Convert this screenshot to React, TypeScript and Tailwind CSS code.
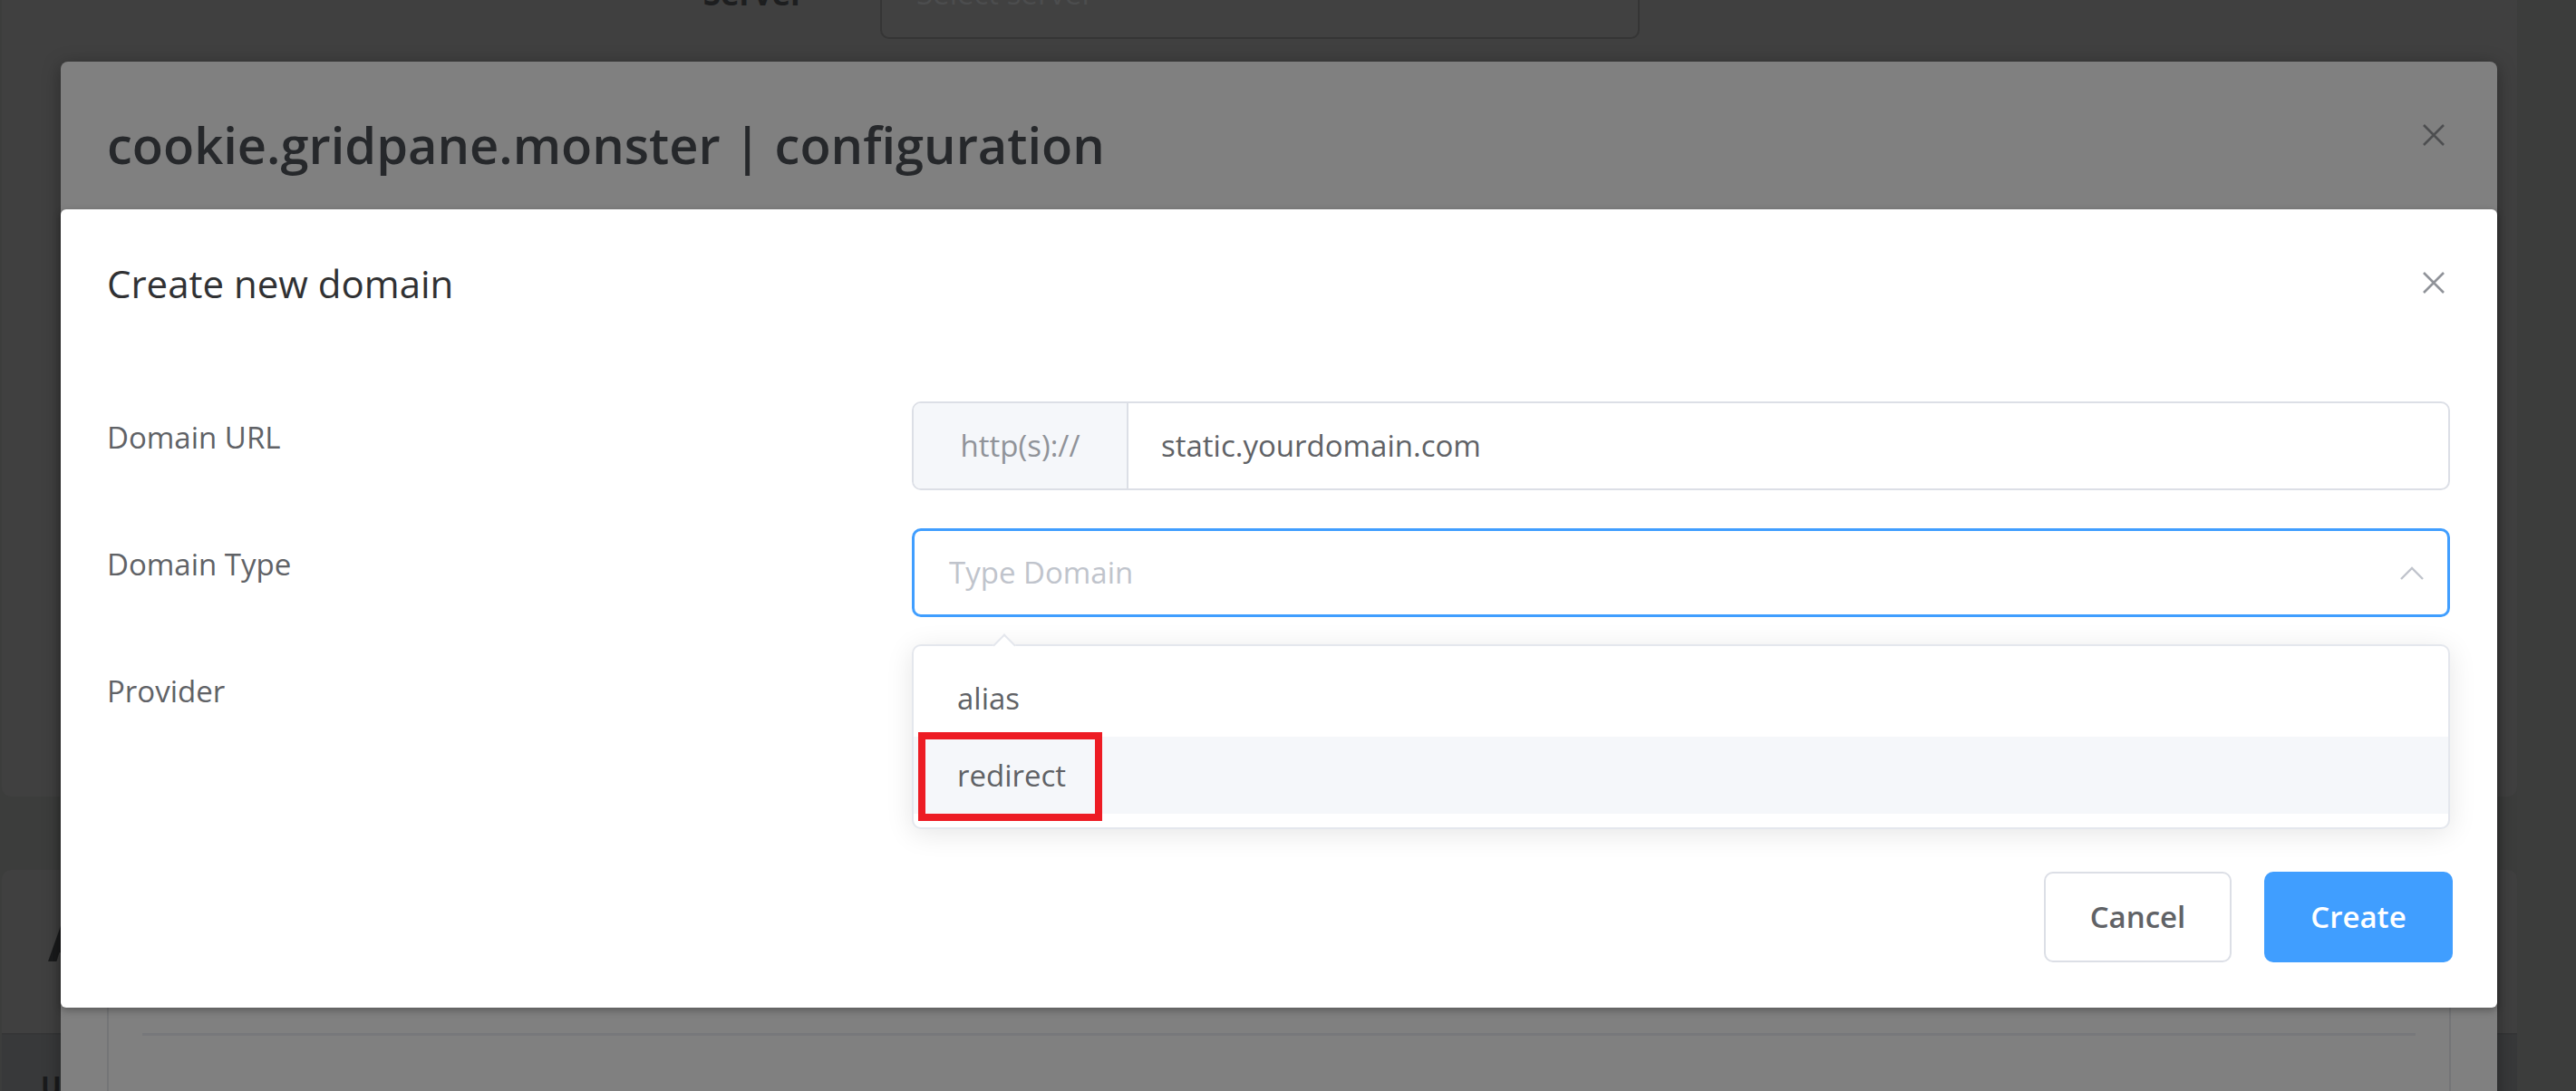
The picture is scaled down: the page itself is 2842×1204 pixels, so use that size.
import React from 'react';

const CloseIcon = ({ color }: { color: string }) => (
  <svg width="24" height="24" viewBox="0 0 24 24" fill="none">
    <path d="M1 1L23 23M23 1L1 23" stroke={color} strokeWidth="2.6" />
  </svg>
);

const Chevron = ({ up }: { up?: boolean }) => (
  <svg width="26" height="15" viewBox="0 0 26 15" fill="none">
    <path
      d={up ? 'M1 14L13 2L25 14' : 'M1 1L13 13L25 1'}
      stroke="#c0c4cc"
      strokeWidth="2.4"
    />
  </svg>
);

const FormRow = ({ label, children }: { label: string; children: React.ReactNode }) => (
  <div className="flex">
    <div className="w-[888px] text-[33px] leading-[80px] text-[#606266]">{label}</div>
    <div className="w-[1697px]">{children}</div>
  </div>
);

export default function App() {
  return (
    <div className="relative h-[1204px] w-[2842px] overflow-hidden bg-[#3c3d3c] font-['Open_Sans',sans-serif]">
      {/* page behind the modals */}
      <div className="pl-[2px] pr-[65px]">
        <div className="-mt-[100px] h-[979px] rounded-b-[10px] bg-[#404040] pt-[43px]">
          <div className="flex items-center">
            <div className="w-[969px] pr-[83px] text-right text-[35px] font-bold text-[#1d1e1f]">Server</div>
            <div className="flex h-[100px] w-[838px] items-center rounded-[10px] border-2 border-[#353535] bg-[#414141] pl-[38px] text-[33px] text-[#4c4d4e]">
              Select server
            </div>
          </div>
        </div>
        <div className="mt-[81px] rounded-t-[10px] bg-[#404040]">
          <div className="pl-[51px] pt-[39px] pb-[61px] text-[58px] font-bold leading-[80px] text-[#1a1b1c]">
            Aliases
          </div>
          <div className="h-[200px] border-t-2 border-[#353637] bg-[#38393a] pl-[43px] pt-[34px] text-[30px] font-bold text-[#1a1b1c]">
            URL
          </div>
        </div>
      </div>

      {/* configuration modal (dimmed) */}
      <div className="absolute left-[67px] top-[68px] h-[1200px] w-[2688px] rounded-[8px] bg-[#808080] shadow-[0_4px_20px_rgba(0,0,0,0.35)]">
        <div className="relative pl-[51px] pr-[60px] pt-[55px] pb-[40px]">
          <h2 className="text-[56px] font-semibold leading-[72px] text-[#26282b]">
            cookie.gridpane.monster | configuration
          </h2>
          <button className="absolute right-[58px] top-[69px]">
            <CloseIcon color="#4d4e50" />
          </button>
        </div>
        <div className="mx-[51px] h-[1200px] rounded-[8px] border-2 border-[#747577]">
          <div className="h-[903px]" />
          <div className="mx-[37px] h-[3px] bg-[#77787b]" />
        </div>
      </div>

      {/* create new domain dialog */}
      <div className="absolute left-[67px] top-[231px] w-[2688px] rounded-[6px] bg-white shadow-[0_3px_8px_rgba(0,0,0,0.3)]">
        <div className="relative pl-[51px] pr-[53px] pt-[52px] pb-[23px]">
          <h3 className="text-[42px] leading-[60px] text-[#303133]">Create new domain</h3>
          <button className="absolute right-[58px] top-[69px]">
            <CloseIcon color="#909399" />
          </button>
        </div>

        <div className="flex flex-col gap-[42px] pl-[51px] pr-[52px] pt-[77px] pb-[116px]">
          <FormRow label="Domain URL">
            <div className="flex h-[98px] overflow-hidden rounded-[10px] border-2 border-[#dcdfe6] text-[33px]">
              <div className="flex w-[237px] items-center justify-center border-r-2 border-[#dcdfe6] bg-[#f5f7fa] text-[#909399]">
                http(s)://
              </div>
              <div className="flex items-center pl-[36px] text-[#606266]">static.yourdomain.com</div>
            </div>
          </FormRow>
          <FormRow label="Domain Type">
            <div className="flex h-[98px] items-center rounded-[10px] border-[3px] border-[#409eff] pl-[38px] pr-[26px] text-[33px] text-[#c0c4cc]">
              <span>Type Domain</span>
              <span className="ml-auto flex">
                <Chevron up />
              </span>
            </div>
          </FormRow>
          <FormRow label="Provider">
            <div className="flex h-[98px] items-center justify-end rounded-[10px] border-2 border-[#dcdfe6] pr-[27px]">
              <Chevron />
            </div>
          </FormRow>
        </div>

        <div className="flex justify-end gap-[36px] pr-[49px] pt-[25px] pb-[50px]">
          <button className="h-[100px] w-[207px] rounded-[10px] border-2 border-[#dcdfe6] bg-white text-[33px] font-semibold text-[#606266]">
            Cancel
          </button>
          <button className="h-[100px] w-[208px] rounded-[10px] bg-[#409eff] text-[33px] font-semibold text-white">
            Create
          </button>
        </div>

        {/* select dropdown */}
        <div className="absolute left-[939px] top-[480px] w-[1697px] rounded-[10px] border-2 border-[#e4e7ed] bg-white py-[15px] shadow-[0_5px_30px_rgba(0,0,0,0.1)]">
          <div className="absolute left-[91px] -top-[10px] h-[18px] w-[18px] rotate-45 border-l-2 border-t-2 border-[#e4e7ed] bg-white" />
          <div className="relative flex h-[85px] items-center pl-[48px] text-[33px] text-[#606266]">alias</div>
          <div className="relative flex h-[85px] items-center bg-[#f5f7fa] pl-[48px] text-[33px] text-[#606266]">
            redirect
          </div>
        </div>

        {/* annotation */}
        <div className="absolute left-[946px] top-[577px] h-[98px] w-[203px] border-[8px] border-[#ed1c24]" />
      </div>
    </div>
  );
}
